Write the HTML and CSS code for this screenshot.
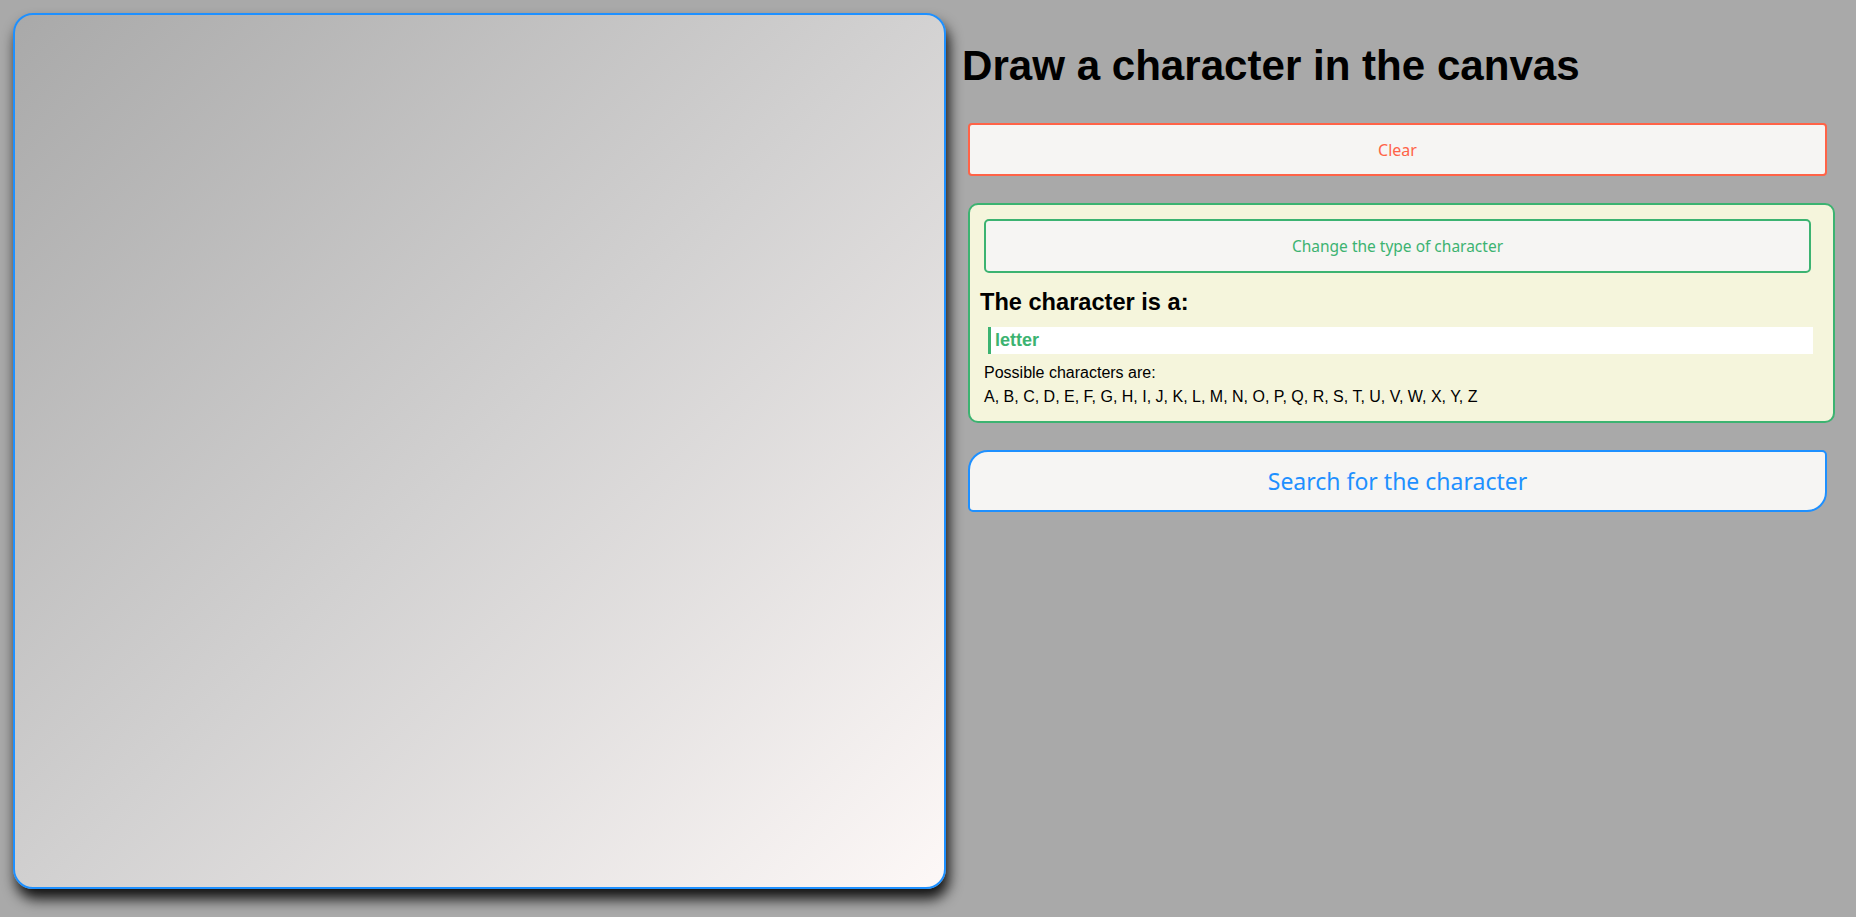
FILE: index.html
```html
<!DOCTYPE html>
<html lang="en">
<head>
<meta charset="utf-8">
<title>Draw a character</title>
<link rel="stylesheet" href="styles.css">
</head>
<body>
<main class="app">
  <canvas class="board" width="929" height="872"></canvas>
  <section class="panel">
    <h1 class="title">Draw a character in the canvas</h1>
    <button class="btn btn-clear">Clear</button>
    <div class="type-box">
      <button class="btn btn-type">Change the type of character</button>
      <h3 class="type-title">The character is a:</h3>
      <div class="type-value">letter</div>
      <div class="possible">
        <div>Possible characters are:</div>
        <div>A, B, C, D, E, F, G, H, I, J, K, L, M, N, O, P, Q, R, S, T, U, V, W, X, Y, Z</div>
      </div>
    </div>
    <button class="btn btn-search">Search for the character</button>
  </section>
</main>
</body>
</html>
```
FILE: styles.css
```css
html, body {
  margin: 0;
  padding: 0;
  height: 100%;
}
body {
  background: #a9a9a9;
  font-family: "Liberation Sans", Arial, sans-serif;
  color: #000;
  overflow: hidden;
}
.app {
  display: flex;
  align-items: flex-start;
  padding: 13px 8px 0 13px;
}
.board {
  display: block;
  flex: none;
  width: 929px;
  height: 872px;
  border: 2px solid #1e90ff;
  border-radius: 20px;
  background: linear-gradient(135deg, #a9a9a9 0%, #d2d1d1 50%, #fdf8f7 100%);
  box-shadow: 3px 10px 14px rgba(0, 0, 0, 0.9);
}
.panel {
  flex: 1;
  margin-left: 16px;
  min-width: 0;
}
.title {
  margin: 29px 0 33px 0;
  font-size: 42.1px;
  font-weight: bold;
  line-height: 48px;
}
.btn {
  display: block;
  background: #f6f5f3;
  font-family: "Noto Sans", "Open Sans", sans-serif;
  cursor: pointer;
  text-align: center;
}
.btn-clear {
  width: 859px;
  height: 53px;
  margin-left: 6px;
  border: 2px solid #ff6347;
  border-radius: 4px;
  color: #ff6347;
  font-size: 16px;
}
.type-box {
  margin: 27px 0 0 6px;
  box-sizing: border-box;
  width: 867px;
  height: 220px;
  background: #f5f5dc;
  border: 2px solid #3cb371;
  border-radius: 10px;
  padding: 14px 20px 0 10px;
}
.btn-type {
  width: 827px;
  height: 54px;
  margin-left: 4px;
  border: 2px solid #3cb371;
  border-radius: 5px;
  color: #3cb371;
  font-size: 15.5px;
}
.type-title {
  margin: 17px 0 12px 0;
  font-size: 23.6px;
  line-height: 25px;
  font-weight: bold;
}
.type-value {
  margin-left: 8px;
  margin-right: 0;
  height: 27px;
  line-height: 27px;
  background: #fff;
  border-left: 3px solid #3cb371;
  padding-left: 4px;
  color: #3cb371;
  font-weight: bold;
  font-size: 18px;
}
.possible {
  margin: 7px 0 0 4px;
  font-size: 16px;
  line-height: 24px;
}
.btn-search {
  margin: 27px 0 0 6px;
  width: 859px;
  height: 62px;
  border: 2px solid #1e90ff;
  border-radius: 20px 5px 20px 5px;
  color: #1e90ff;
  font-size: 23px;
}
```
